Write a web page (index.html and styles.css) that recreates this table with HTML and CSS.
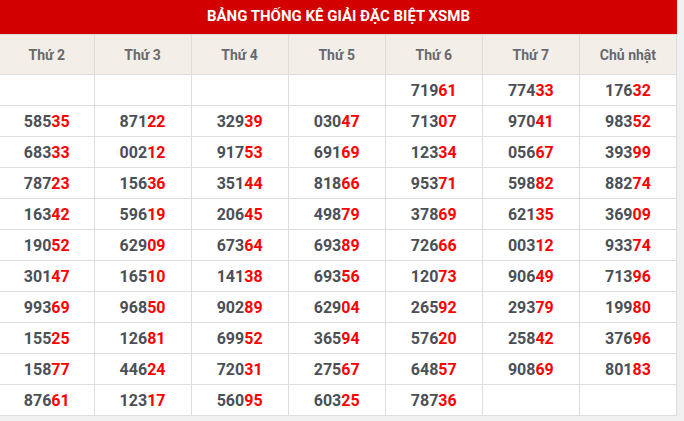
FILE: index.html
```html
<!DOCTYPE html>
<html lang="vi">
<head>
<meta charset="utf-8">
<link rel="stylesheet" href="styles.css">
</head>
<body>
<div class="wrap">
  <div class="title">BẢNG THỐNG KÊ GIẢI ĐẶC BIỆT XSMB</div>
  <table class="stats">
    <colgroup><col class="c-first"><col><col><col><col><col><col></colgroup>
    <thead>
      <tr><th>Thứ 2</th><th>Thứ 3</th><th>Thứ 4</th><th>Thứ 5</th><th>Thứ 6</th><th>Thứ 7</th><th>Chủ nhật</th></tr>
    </thead>
    <tbody>
      <tr><td></td><td></td><td></td><td></td><td>719<b>61</b></td><td>774<b>33</b></td><td>176<b>32</b></td></tr>
      <tr><td>585<b>35</b></td><td>871<b>22</b></td><td>329<b>39</b></td><td>030<b>47</b></td><td>713<b>07</b></td><td>970<b>41</b></td><td>983<b>52</b></td></tr>
      <tr><td>683<b>33</b></td><td>002<b>12</b></td><td>917<b>53</b></td><td>691<b>69</b></td><td>123<b>34</b></td><td>056<b>67</b></td><td>393<b>99</b></td></tr>
      <tr><td>787<b>23</b></td><td>156<b>36</b></td><td>351<b>44</b></td><td>818<b>66</b></td><td>953<b>71</b></td><td>598<b>82</b></td><td>882<b>74</b></td></tr>
      <tr><td>163<b>42</b></td><td>596<b>19</b></td><td>206<b>45</b></td><td>498<b>79</b></td><td>378<b>69</b></td><td>621<b>35</b></td><td>369<b>09</b></td></tr>
      <tr><td>190<b>52</b></td><td>629<b>09</b></td><td>673<b>64</b></td><td>693<b>89</b></td><td>726<b>66</b></td><td>003<b>12</b></td><td>933<b>74</b></td></tr>
      <tr><td>301<b>47</b></td><td>165<b>10</b></td><td>141<b>38</b></td><td>693<b>56</b></td><td>120<b>73</b></td><td>906<b>49</b></td><td>713<b>96</b></td></tr>
      <tr><td>993<b>69</b></td><td>968<b>50</b></td><td>902<b>89</b></td><td>629<b>04</b></td><td>265<b>92</b></td><td>293<b>79</b></td><td>199<b>80</b></td></tr>
      <tr><td>155<b>25</b></td><td>126<b>81</b></td><td>699<b>52</b></td><td>365<b>94</b></td><td>576<b>20</b></td><td>258<b>42</b></td><td>376<b>96</b></td></tr>
      <tr><td>158<b>77</b></td><td>446<b>24</b></td><td>720<b>31</b></td><td>275<b>67</b></td><td>648<b>57</b></td><td>908<b>69</b></td><td>801<b>83</b></td></tr>
      <tr><td>876<b>61</b></td><td>123<b>17</b></td><td>560<b>95</b></td><td>603<b>25</b></td><td>787<b>36</b></td><td></td><td></td></tr>
    </tbody>
  </table>
</div>
</body>
</html>
```
FILE: styles.css
```css
html, body {
  margin: 0;
  padding: 0;
  background: #f0f0f0;
}
body {
  font-family: Roboto, "Liberation Sans", sans-serif;
}
.wrap {
  width: 677px;
  background: #fff;
}
.title {
  height: 34px;
  line-height: 32px;
  background: #d30000;
  color: #fff;
  font-weight: 700;
  font-size: 15px;
  text-align: center;
}
.stats {
  width: 677px;
  border-collapse: collapse;
  table-layout: fixed;
}
.stats .c-first { width: 94px; }
.stats th, .stats td {
  border: 1px solid #dddddd;
  text-align: center;
  padding: 0;
}
.stats tr > :first-child { border-left: none; }
.stats th {
  height: 39px;
  background: #f3efe8;
  color: #666a70;
  font-size: 14px;
  font-weight: 700;
}
.stats td {
  height: 30px;
  font-size: 16px;
  font-weight: 700;
  color: #4b5057;
}
.stats td b {
  color: #ff0000;
  font-weight: 700;
}
```
